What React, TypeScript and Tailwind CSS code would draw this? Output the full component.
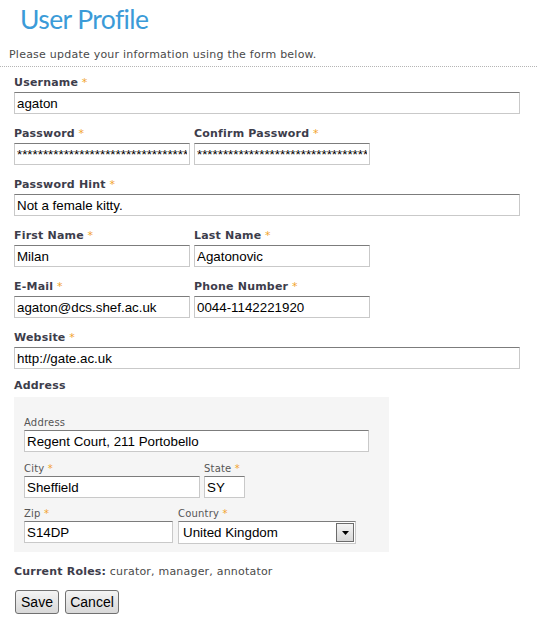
import React from "react";

const labelCls = "block text-[11px] leading-[16px] font-bold text-[#3d3d4b] tracking-[0.2px]";
const smallLabelCls = "block text-[10px] leading-[14px] text-[#555] tracking-[0.2px]";
const inputCls =
  "block h-[22px] border border-[#c9c9c9] border-t-[#7c7c7c] bg-white px-[2px] text-[13.333px] text-black outline-none";
const arial = { fontFamily: '"Liberation Sans", Arial, sans-serif' };

function Star() {
  return <span className="text-[#f2a32c] font-normal"> *</span>;
}

function Field({ label, value, width }: { label: string; value: string; width: string }) {
  return (
    <div className="flex flex-col">
      <label className={labelCls}>
        {label}
        <Star />
      </label>
      <input readOnly defaultValue={value} className={`${inputCls} ${width} mt-[1px]`} style={arial} />
    </div>
  );
}

function SmallField({ label, value, width, star = true }: { label: string; value: string; width: string; star?: boolean }) {
  return (
    <div className="flex flex-col">
      <label className={smallLabelCls}>
        {label}
        {star && <Star />}
      </label>
      <input readOnly defaultValue={value} className={`${inputCls} ${width}`} style={arial} />
    </div>
  );
}

export default function App() {
  const stars = "*********************************";
  return (
    <div className="w-[537px] h-[619px] bg-white" style={{ fontFamily: '"DejaVu Sans", Verdana, sans-serif' }}>
      <h1
        className="pl-[20px] pt-[2px] text-[26.5px] leading-[34px] text-[#3b9bd8] font-normal"
        style={{ fontFamily: 'Lato, "Open Sans", sans-serif', letterSpacing: "-0.6px" }}
      >
        User Profile
      </h1>
      <p className="pl-[9px] mt-[12px] text-[11px] leading-[14px] text-[#4a4a4a] tracking-[0.23px]">
        Please update your information using the form below.
      </p>
      <div className="mt-[4px] border-t border-dotted border-[#b5b5b5]" />
      <div className="pl-[14px] pt-[8px] flex flex-col gap-[12px]">
        <Field label="Username" value="agaton" width="w-[506px]" />
        <div className="flex gap-[4px]">
          <Field label="Password" value={stars} width="w-[176px]" />
          <Field label="Confirm Password" value={stars} width="w-[176px]" />
        </div>
        <Field label="Password Hint" value="Not a female kitty." width="w-[506px]" />
        <div className="flex gap-[4px]">
          <Field label="First Name" value="Milan" width="w-[176px]" />
          <Field label="Last Name" value="Agatonovic" width="w-[176px]" />
        </div>
        <div className="flex gap-[4px]">
          <Field label="E-Mail" value="agaton@dcs.shef.ac.uk" width="w-[176px]" />
          <Field label="Phone Number" value="0044-1142221920" width="w-[176px]" />
        </div>
        <Field label="Website" value="http://gate.ac.uk" width="w-[506px]" />
        <div className="flex flex-col -mt-[3px]">
          <div className={labelCls}>Address</div>
          <div className="mt-[3px] w-[375px] bg-[#f5f5f5] pl-[10px] pt-[19px] pb-[8px] flex flex-col">
            <SmallField label="Address" value="Regent Court, 211 Portobello" width="w-[345px]" star={false} />
            <div className="flex gap-[4px] mt-[10px]">
              <SmallField label="City" value="Sheffield" width="w-[176px]" />
              <SmallField label="State" value="SY" width="w-[41px]" />
            </div>
            <div className="flex gap-[5px] mt-[9px]">
              <SmallField label="Zip" value="S14DP" width="w-[149px]" />
              <div className="flex flex-col">
                <label className={smallLabelCls}>
                  Country
                  <Star />
                </label>
                <div
                  className="flex items-center h-[23px] w-[178px] border border-[#c9c9c9] border-t-[#7c7c7c] bg-white"
                  style={arial}
                >
                  <span className="flex-1 pl-[4px] text-[13.333px] text-black">United Kingdom</span>
                  <span className="mr-[1px] flex h-[19px] w-[18px] items-center justify-center border border-[#6b6b6b] bg-gradient-to-b from-[#f4f4f4] to-[#d8d8d8]">
                    <svg width="7" height="4" viewBox="0 0 7 4">
                      <polygon points="0,0 7,0 3.5,4" fill="#000" />
                    </svg>
                  </span>
                </div>
              </div>
            </div>
          </div>
        </div>
        <div className="mt-[1px] text-[11px] leading-[14px] text-[#4a4a4a] tracking-[0.2px]">
          <span className="font-bold text-[#3d3d4b]">Current Roles:</span> curator, manager, annotator
        </div>
        <div className="flex gap-[6px] -mt-[1px] ml-[1px]" style={arial}>
          <button className="h-[24px] w-[44px] rounded-[3px] border border-[#707070] bg-gradient-to-b from-[#f4f4f4] to-[#d8d8d8] text-[14px] text-black">
            Save
          </button>
          <button className="h-[24px] w-[54px] rounded-[3px] border border-[#707070] bg-gradient-to-b from-[#f4f4f4] to-[#d8d8d8] text-[14px] text-black">
            Cancel
          </button>
        </div>
      </div>
    </div>
  );
}
